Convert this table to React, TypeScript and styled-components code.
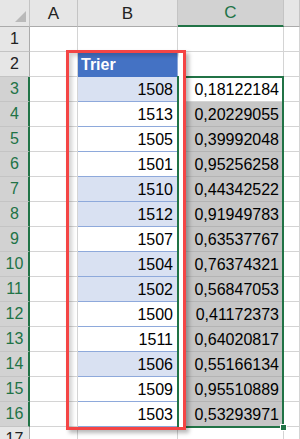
import * as React from 'react';
import styled, { createGlobalStyle } from 'styled-components';

const GlobalStyle = createGlobalStyle`
  html, body {
    margin: 0;
    padding: 0;
    background: #fff;
    overflow: hidden;
  }
  body {
    font-family: 'Liberation Sans', Arial, sans-serif;
  }
  * { box-sizing: border-box; }
`;

const GREEN = '#217346';

const Sheet = styled.div`
  position: relative;
  width: 300px;
  height: 439px;
  overflow: hidden;
  display: grid;
  grid-template-columns: 30px 48px 100px 106px 1fr;
  grid-template-rows: 27px repeat(17, 25px);
  font-size: 16px;
  color: #000;
`;

const Corner = styled.div`
  background: #e6e6e6;
  border-right: 1px solid #c4c4c4;
  border-bottom: 1px solid #ababab;
  display: flex;
  align-items: flex-end;
  justify-content: flex-end;
  padding: 0 3px 4px 0;
`;

const ColHeader = styled.div<{ $selected?: boolean }>`
  background: ${p => (p.$selected ? '#d2d2d2' : '#e6e6e6')};
  color: ${p => (p.$selected ? GREEN : '#222')};
  border-right: 1px solid #c4c4c4;
  border-bottom: ${p => (p.$selected ? `2px solid ${GREEN}` : '1px solid #ababab')};
  display: flex;
  align-items: center;
  justify-content: center;
  padding-top: 1px;
  font-size: 17px;
`;

const RowHeader = styled.div<{ $selected?: boolean }>`
  background: ${p => (p.$selected ? '#d2d2d2' : '#e6e6e6')};
  color: ${p => (p.$selected ? GREEN : '#222')};
  border-right: ${p => (p.$selected ? `2px solid ${GREEN}` : '1px solid #ababab')};
  border-bottom: 1px solid #c4c4c4;
  display: flex;
  align-items: center;
  justify-content: center;
  font-size: 16px;
  padding-left: ${p => (p.$selected ? '1px' : '0')};
`;

type Fill = 'plain' | 'band' | 'head' | 'sel' | 'bplain';

const fills: Record<Fill, string> = {
  plain: '#fff',
  bplain: '#fff',
  band: '#d9e1f2',
  head: '#4472c4',
  sel: '#c6c6c6',
};

const Cell = styled.div<{ $fill?: Fill; $align?: 'left' | 'right' }>`
  background: ${p => fills[p.$fill || 'plain']};
  border-right: 1px solid
    ${p => (p.$fill === 'band' || p.$fill === 'bplain' || p.$fill === 'head' ? '#8ea9db' : p.$fill === 'sel' ? '#b4b4b4' : '#d4d4d4')};
  border-bottom: 1px solid
    ${p => (p.$fill === 'band' || p.$fill === 'bplain' ? '#8ea9db' : p.$fill === 'sel' ? '#b4b4b4' : p.$fill === 'head' ? '#4472c4' : '#d4d4d4')};
  display: flex;
  align-items: flex-end;
  justify-content: ${p => (p.$align === 'left' ? 'flex-start' : 'flex-end')};
  padding: 0 4px 2px 3px;
  color: ${p => (p.$fill === 'head' ? '#fff' : '#000')};
  font-weight: ${p => (p.$fill === 'head' ? 700 : 400)};
  white-space: nowrap;
  overflow: hidden;
`;

const Selection = styled.div`
  position: absolute;
  left: 177px;
  top: 76px;
  width: 107px;
  height: 352px;
  border: 2px solid ${GREEN};
  pointer-events: none;
`;

const FillHandle = styled.div`
  position: absolute;
  right: -5px;
  bottom: -5px;
  width: 7px;
  height: 7px;
  background: ${GREEN};
  border: 1px solid #fff;
`;

const Callout = styled.div`
  position: absolute;
  left: 66px;
  top: 50px;
  width: 120px;
  height: 380px;
  border: 3px solid #f44545;
  box-shadow: inset -4px 0 0 #fff, inset 3px 3px 4px rgba(0, 0, 0, 0.18),
    3px 3px 4px rgba(0, 0, 0, 0.28);
  pointer-events: none;
`;

const rows: [number, string, boolean][] = [
  [1508, '0,18122184', true],
  [1513, '0,20229055', false],
  [1505, '0,39992048', false],
  [1501, '0,95256258', false],
  [1510, '0,44342522', true],
  [1512, '0,91949783', true],
  [1507, '0,63537767', false],
  [1504, '0,76374321', true],
  [1502, '0,56847053', true],
  [1500, '0,41172373', false],
  [1511, '0,64020817', false],
  [1506, '0,55166134', true],
  [1509, '0,95510889', false],
  [1503, '0,53293971', false],
];

const App = () => {
  return (
    <>
      <GlobalStyle />
      <Sheet>
        <Corner>
          <svg width="11" height="11" viewBox="0 0 11 11">
            <polygon points="11,0 11,11 0,11" fill="#b9b9b9" />
          </svg>
        </Corner>
        <ColHeader>A</ColHeader>
        <ColHeader>B</ColHeader>
        <ColHeader $selected>C</ColHeader>
        <ColHeader />

        <RowHeader>1</RowHeader>
        <Cell />
        <Cell />
        <Cell />
        <Cell />

        <RowHeader>2</RowHeader>
        <Cell />
        <Cell $fill="head" $align="left">Trier</Cell>
        <Cell />
        <Cell />

        {rows.map(([b, c, band], i) => (
          <React.Fragment key={b}>
            <RowHeader $selected>{i + 3}</RowHeader>
            <Cell />
            <Cell $fill={band ? 'band' : 'bplain'}>{b}</Cell>
            <Cell $fill={i === 0 ? 'plain' : 'sel'}>{c}</Cell>
            <Cell />
          </React.Fragment>
        ))}

        <RowHeader>17</RowHeader>
        <Cell />
        <Cell />
        <Cell />
        <Cell />

        <Selection>
          <FillHandle />
        </Selection>
        <Callout />
      </Sheet>
    </>
  );
};

export default App;
